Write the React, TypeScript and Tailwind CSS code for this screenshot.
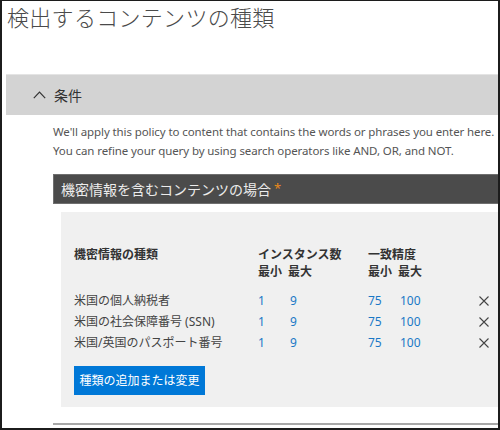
import { ReactNode } from "react";

const jp = "font-['Noto_Sans','Noto_Sans_CJK_JP',sans-serif]";

const ChevronUp = () => (
  <svg width="13" height="8" viewBox="0 0 13 8" className="shrink-0">
    <path d="M0.8 7.2 L6.5 1.2 L12.2 7.2" fill="none" stroke="#333" strokeWidth="1.2" />
  </svg>
);

const Close = () => (
  <svg width="10" height="10" viewBox="0 0 10 10">
    <path d="M0.5 0.5 L9.5 9.5 M9.5 0.5 L0.5 9.5" fill="none" stroke="#444" strokeWidth="1.1" />
  </svg>
);

interface RowProps {
  name: ReactNode;
}

const DataRow = ({ name }: RowProps) => {
  return (
    <div className="flex items-center h-[21px] text-[12px] leading-[21px]">
      <div className="w-[184px] text-[#444]">{name}</div>
      <div className="w-[30px] text-[#1a78c6]">1</div>
      <div className="w-[80px] pl-[2px] text-[#1a78c6]">9</div>
      <div className="w-[30px] text-[#1a78c6]">75</div>
      <div className="w-[81px] pl-[2px] text-[#1a78c6]">100</div>
      <Close />
    </div>
  );
};

export default function App() {
  return (
    <div
      className={`w-[500px] h-[430px] overflow-hidden bg-white border-t border-x-2 border-b-2 border-[#1c1c1c] ${jp}`}
    >
      <h1 className="pl-[5px] text-[22px] leading-[32px] font-light text-[#4a4a4a] whitespace-nowrap tracking-[0.3px]">
        検出するコンテンツの種類
      </h1>

      <div className="mt-[41px] ml-[4px] h-[41px] bg-[#d3d3d3] border-t border-[#e4e4e4] flex items-center pl-[27px] gap-[8px]">
        <ChevronUp />
        <span className="text-[14px] text-[#333]">条件</span>
      </div>

      <div className="pl-[51px]">
        <p className="mt-[7px] text-[11.5px] leading-[19px] text-[#555] whitespace-nowrap tracking-[-0.1px]">
          We'll apply this policy to content that contains the words or phrases you enter here.
          <br />
          You can refine your query by using search operators like AND, OR, and NOT.
        </p>

        <div className="mt-[14px] h-[30px] bg-[#4b4b4b] border border-[#6f6f6f] border-r-0 flex items-center pl-[7px] whitespace-nowrap">
          <span className="text-[14px] text-[#ececec]">機密情報を含むコンテンツの場合</span>
          <span className="ml-[3px] text-[13px] text-[#e8891b]">*</span>
        </div>

        <div className="mt-[8px] ml-[8px] bg-[#f0f0f0] pl-[13px] pt-[34px] pb-[12px] whitespace-nowrap">
          <div className="flex text-[12px] leading-[17px] font-bold text-[#333]">
            <div className="w-[184px]">機密情報の種類</div>
            <div className="w-[110px]">
              <div>インスタンス数</div>
              <div className="flex">
                <span className="w-[30px]">最小</span>
                <span>最大</span>
              </div>
            </div>
            <div>
              <div>一致精度</div>
              <div className="flex">
                <span className="w-[30px]">最小</span>
                <span>最大</span>
              </div>
            </div>
          </div>

          <div className="mt-[10px]">
            <DataRow name="米国の個人納税者" />
            <DataRow name="米国の社会保障番号 (SSN)" />
            <DataRow name="米国/英国のパスポート番号" />
          </div>

          <button className="mt-[13px] h-[29px] w-[131px] bg-[#0078d7] text-white text-[12px] flex items-center justify-center">
            種類の追加または変更
          </button>
        </div>

        <div className="mt-[16px] h-[2px] bg-[#a8a8a8]" />
      </div>
    </div>
  );
}
